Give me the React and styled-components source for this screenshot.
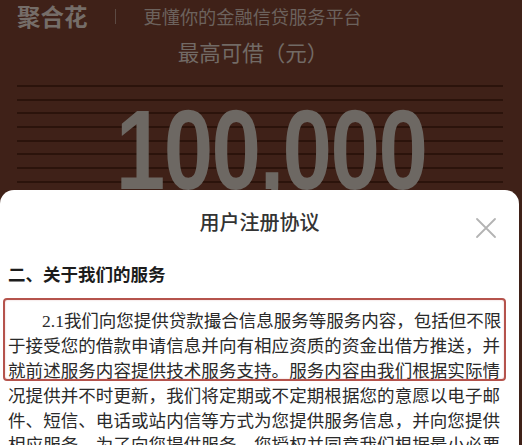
import React from 'react';
import styled, { createGlobalStyle } from 'styled-components';

const GlobalStyle = createGlobalStyle`
  html, body {
    margin: 0;
    padding: 0;
    background: #3f2118;
  }
  body {
    font-family: "Noto Sans CJK SC", "Noto Sans", sans-serif;
  }
`;

const Page = styled.div`
  width: 522px;
  height: 445px;
  overflow: hidden;
  background: #3f2118;
`;

// fundo escuro com a oferta
const Hero = styled.section`
  height: 190px;
  overflow: hidden;
  display: flex;
  flex-direction: column;
`;

const BrandRow = styled.div`
  display: flex;
  align-items: center;
  height: 32px;
  padding-left: 17px;
`;

const Brand = styled.span`
  font-size: 23.5px;
  font-weight: 700;
  color: #756d68;
  line-height: 32px;
`;

const Divider = styled.span`
  width: 1px;
  height: 15px;
  background: #5c4a43;
  margin: 0 28px 0 27px;
`;

const Slogan = styled.span`
  font-size: 18.2px;
  color: #6c625d;
  line-height: 32px;
`;

const Caption = styled.div`
  text-align: center;
  font-size: 21.5px;
  color: #726a65;
  line-height: 30px;
  margin-top: 5px;
  padding-right: 16px;
`;

const Stripes = styled.div`
  margin: 18px 19px 0 17px;
  flex: 1;
  background: repeating-linear-gradient(
    to bottom,
    #2b130b 0px,
    #2b130b 2px,
    transparent 2px,
    transparent 13.7px
  );
  display: flex;
  justify-content: center;
  align-items: flex-start;
  padding-left: 22px;
`;

const Amount = styled.div`
  font-family: "Liberation Sans", "Arial", sans-serif;
  font-weight: 700;
  font-size: 114px;
  line-height: 0.72;
  letter-spacing: -2px;
  color: #6d6863;
  margin-top: 24px;
  transform: scaleX(0.78);
  transform-origin: center top;
`;

// modal
const Sheet = styled.section`
  background: #fff;
  margin-right: 3px;
  border-radius: 14px 14px 0 0;
  height: 255px;
  overflow: hidden;
`;

const SheetHeader = styled.header`
  display: grid;
  grid-template-columns: 1fr auto 1fr;
  align-items: center;
  height: 64px;
`;

const Title = styled.h2`
  grid-column: 2;
  margin: 0;
  font-size: 20px;
  font-weight: 500;
  color: #333;
  line-height: 28px;
  margin-top: -1px;
`;

const Close = styled.button`
  grid-column: 3;
  justify-self: end;
  margin-right: 22px;
  margin-top: 11px;
  padding: 0;
  border: 0;
  background: none;
  width: 22px;
  height: 22px;
  display: flex;
`;

const Body = styled.div`
  padding: 8px 19px 0 8px;
`;

const Heading = styled.h3`
  margin: 0 0 21px;
  font-size: 17.5px;
  font-weight: 700;
  color: #1c1c1c;
  line-height: 24.7px;
`;

const Paragraph = styled.div`
  font-size: 17.5px;
  line-height: 24.7px;
  color: #2a2a2a;
`;

const Highlight = styled.div`
  position: relative;
  &::after {
    content: '';
    position: absolute;
    top: -10px;
    bottom: 2px;
    left: -5px;
    right: -6px;
    border: 2px solid #b5534c;
    border-radius: 4px;
    box-shadow: inset 0 0 2px rgba(181, 83, 76, 0.35);
    pointer-events: none;
  }
`;

const Line = styled.div`
  text-align: justify;
  text-align-last: justify;
  white-space: nowrap;
  padding-left: ${(p) => (p.indent ? '34px' : '0')};
`;

const Num = styled.span`
  font-family: "Liberation Serif", serif;
`;

const boxed = [
  '于接受您的借款申请信息并向有相应资质的资金出借方推送，并',
  '就前述服务内容提供技术服务支持。服务内容由我们根据实际情',
];

const rest = [
  '况提供并不时更新，我们将定期或不定期根据您的意愿以电子邮',
  '件、短信、电话或站内信等方式为您提供服务信息，并向您提供',
  '相应服务。为了向您提供服务，您授权并同意我们根据最小必要',
];

function CloseIcon() {
  return (
    <svg width="22" height="22" viewBox="0 0 22 22">
      <path d="M2 2 L20 20 M20 2 L2 20" stroke="#b3b3b3" strokeWidth="1.8" strokeLinecap="round" />
    </svg>
  );
}

function App() {
  return (
    <Page>
      <GlobalStyle />
      <Hero>
        <BrandRow>
          <Brand>聚合花</Brand>
          <Divider />
          <Slogan>更懂你的金融信贷服务平台</Slogan>
        </BrandRow>
        <Caption>最高可借（元）</Caption>
        <Stripes>
          <Amount>100,000</Amount>
        </Stripes>
      </Hero>

      <Sheet>
        <SheetHeader>
          <Title>用户注册协议</Title>
          <Close aria-label="关闭">
            <CloseIcon />
          </Close>
        </SheetHeader>
        <Body>
          <Heading>二、关于我们的服务</Heading>
          <Paragraph>
            <Highlight>
              <Line indent>
                <Num>2.1</Num>我们向您提供贷款撮合信息服务等服务内容，包括但不限
              </Line>
              {boxed.map((t) => (
                <Line key={t}>{t}</Line>
              ))}
            </Highlight>
            {rest.map((t) => (
              <Line key={t}>{t}</Line>
            ))}
          </Paragraph>
        </Body>
      </Sheet>
    </Page>
  );
}

export default App;
